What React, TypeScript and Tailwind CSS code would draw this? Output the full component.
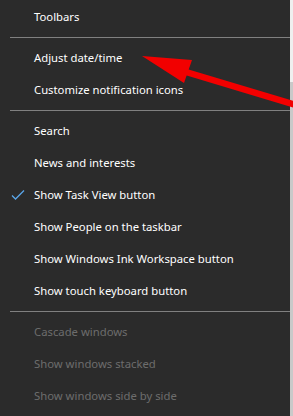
import React from "react";

type Item = { label: string; checked?: boolean; disabled?: boolean } | "sep";

const items: Item[] = [
  { label: "Toolbars" },
  "sep",
  { label: "Adjust date/time" },
  { label: "Customize notification icons" },
  "sep",
  { label: "Search" },
  { label: "News and interests" },
  { label: "Show Task View button", checked: true },
  { label: "Show People on the taskbar" },
  { label: "Show Windows Ink Workspace button" },
  { label: "Show touch keyboard button" },
  "sep",
  { label: "Cascade windows", disabled: true },
  { label: "Show windows stacked", disabled: true },
  { label: "Show windows side by side", disabled: true },
];

function Check() {
  return (
    <svg width="14" height="12" viewBox="0 0 14 12" className="absolute left-[11px] top-[10px]">
      <path d="M1 6.5 L4.5 10 L13 1.5" fill="none" stroke="#5aa5e8" strokeWidth="1.3" />
    </svg>
  );
}

export default function App() {
  return (
    <div className="relative flex h-[416px] w-[293px] overflow-hidden bg-[#2b2b2b]" style={{ fontFamily: '"Noto Sans", "Open Sans", sans-serif' }}>
      {/* Menu */}
      <div className="flex w-[290px] flex-col pt-[1px]">
        {items.map((item, i) =>
          item === "sep" ? (
            <div key={i} className="flex h-[9px] items-center pl-[10px]">
              <div className="h-px w-full bg-[#808080]" />
            </div>
          ) : (
            <div
              key={i}
              className={`relative flex h-8 items-center pl-[34px] pt-[1px] text-[11.3px] ${item.disabled ? "text-[#6d6d6d]" : "text-white"}`}
            >
              {item.checked && <Check />}
              {item.label}
            </div>
          )
        )}
      </div>

      {/* Window behind, right edge */}
      <div className="flex w-[3px] flex-col">
        <div className="h-[82px] bg-[#efefef]" />
        <div className="flex-1 bg-[#c9c9c9]" />
      </div>

      {/* Red arrow annotation */}
      <svg className="absolute left-0 top-0" width="293" height="416" viewBox="0 0 293 416">
        <line x1="186" y1="72" x2="296" y2="105" stroke="#f20000" strokeWidth="6.5" />
        <polygon points="142,56 192,60 184,83" fill="#f20000" />
      </svg>
    </div>
  );
}
